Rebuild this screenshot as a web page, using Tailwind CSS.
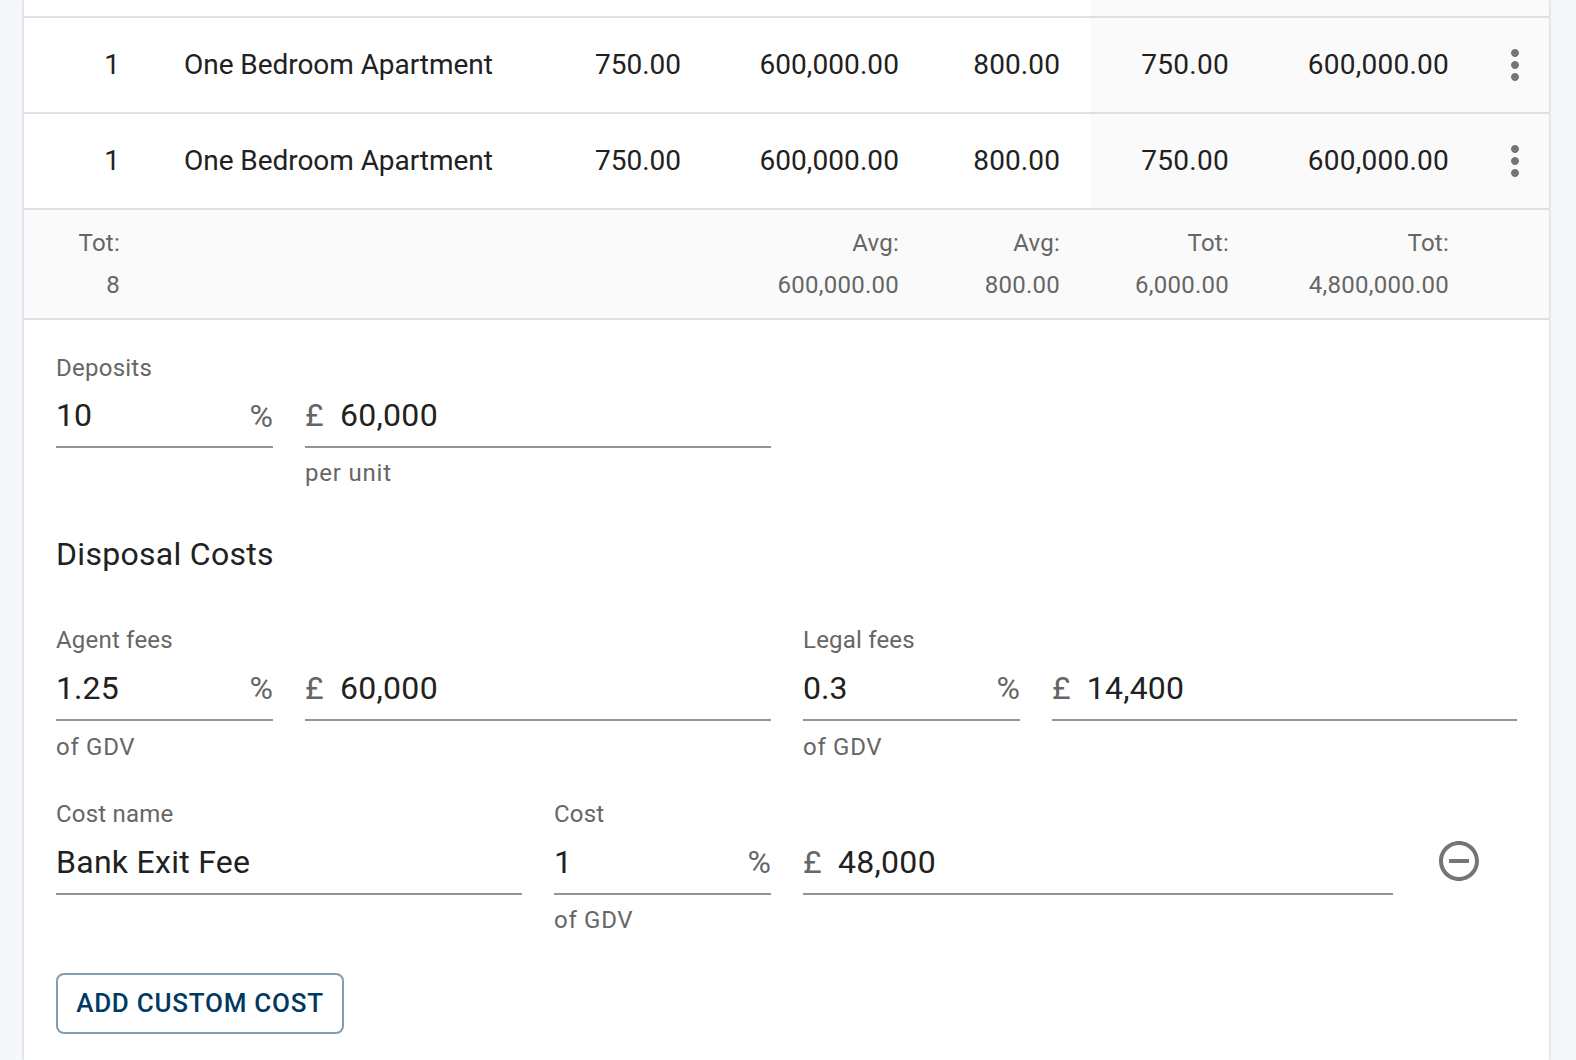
<!doctype html>
<html lang="en">
<head>
<meta charset="utf-8">
<title>Sales</title>
<script src="https://cdn.jsdelivr.net/npm/@tailwindcss/browser@4"></script>
</head>
<body class="bg-[#f5f8fb] font-['Roboto',sans-serif] text-[#212121] overflow-hidden">
<div class="ml-[24px] w-[1525px] h-[1060px] bg-white shadow-[0_0_3px_rgba(0,0,0,0.25)] overflow-hidden">

    <!-- Units table -->
    <div class="grid grid-cols-[128px_376px_185px_217px_161px_169px_221px_68px] h-[18px] border-b-2 border-[#e0e0e0]">
        <div class="col-span-5"></div>
        <div class="col-span-3 bg-[#fafafa]"></div>
    </div>

    <div class="grid grid-cols-[128px_376px_185px_217px_161px_169px_221px_68px] h-[96px] border-b-2 border-[#e0e0e0] text-[28px] items-stretch">
        <div class="flex items-center justify-end pr-[32px]">1</div>
        <div class="flex items-center pl-[32px] tracking-[-0.05px]">One Bedroom Apartment</div>
        <div class="flex items-center justify-end pr-[32px]">750.00</div>
        <div class="flex items-center justify-end pr-[31px] tracking-[0.08px]">600,000.00</div>
        <div class="flex items-center justify-end pr-[31px] tracking-[0.1px]">800.00</div>
        <div class="flex items-center justify-end pr-[31px] bg-[#fafafa] tracking-[0.3px]">750.00</div>
        <div class="flex items-center justify-end pr-[32px] bg-[#fafafa] tracking-[0.25px]">600,000.00</div>
        <div class="flex items-center justify-center bg-[#fafafa]">
            <svg class="w-[48px] h-[48px] fill-[#757575]" viewBox="0 0 24 24"><path d="M12 8c1.1 0 2-.9 2-2s-.9-2-2-2-2 .9-2 2 .9 2 2 2zm0 2c-1.1 0-2 .9-2 2s.9 2 2 2 2-.9 2-2-.9-2-2-2zm0 6c-1.1 0-2 .9-2 2s.9 2 2 2 2-.9 2-2-.9-2-2-2z"/></svg>
        </div>
    </div>

    <div class="grid grid-cols-[128px_376px_185px_217px_161px_169px_221px_68px] h-[96px] border-b-2 border-[#e0e0e0] text-[28px] items-stretch">
        <div class="flex items-center justify-end pr-[32px]">1</div>
        <div class="flex items-center pl-[32px] tracking-[-0.05px]">One Bedroom Apartment</div>
        <div class="flex items-center justify-end pr-[32px]">750.00</div>
        <div class="flex items-center justify-end pr-[31px] tracking-[0.08px]">600,000.00</div>
        <div class="flex items-center justify-end pr-[31px] tracking-[0.1px]">800.00</div>
        <div class="flex items-center justify-end pr-[31px] bg-[#fafafa] tracking-[0.3px]">750.00</div>
        <div class="flex items-center justify-end pr-[32px] bg-[#fafafa] tracking-[0.25px]">600,000.00</div>
        <div class="flex items-center justify-center bg-[#fafafa]">
            <svg class="w-[48px] h-[48px] fill-[#757575]" viewBox="0 0 24 24"><path d="M12 8c1.1 0 2-.9 2-2s-.9-2-2-2-2 .9-2 2 .9 2 2 2zm0 2c-1.1 0-2 .9-2 2s.9 2 2 2 2-.9 2-2-.9-2-2-2zm0 6c-1.1 0-2 .9-2 2s.9 2 2 2 2-.9 2-2-.9-2-2-2z"/></svg>
        </div>
    </div>

    <div class="grid grid-cols-[128px_376px_185px_217px_161px_169px_221px_68px] h-[110px] pt-[12px] border-b-2 border-[#e0e0e0] bg-[#fafafa] text-[24px] leading-[42px] text-[#666666] tracking-[0.25px] text-right">
        <div class="pr-[32px]">Tot:<br>8</div>
        <div></div>
        <div></div>
        <div class="pr-[31px]">Avg:<br>600,000.00</div>
        <div class="pr-[31px]">Avg:<br>800.00</div>
        <div class="pr-[31px]">Tot:<br>6,000.00</div>
        <div class="pr-[32px]">Tot:<br>4,800,000.00</div>
        <div></div>
    </div>

    <!-- Form -->
    <div class="px-[32px] pt-[32px]">
        <!-- Deposits -->
        <div class="flex gap-[32px]">
            <div class="w-[217px]">
                <div class="h-[32px] text-[24px] leading-[32px] text-[#666666] tracking-[0.25px]">Deposits</div>
                <div class="h-[64px] flex items-center justify-between border-b-2 border-[#949494] text-[32px]">
                    <span>10</span><span class="text-[32px] text-[#666666] mt-[1px]">%</span>
                </div>
            </div>
            <div class="w-[466px] pt-[32px]">
                <div class="h-[64px] flex items-center gap-[16px] border-b-2 border-[#949494] text-[32px] tracking-[0.3px]">
                    <span class="text-[#666666]">£</span><span>60,000</span>
                </div>
                <div class="mt-[9px] text-[24px] leading-[32px] text-[#666666] tracking-[0.8px]">per unit</div>
            </div>
        </div>

        <!-- Disposal costs -->
        <h2 class="mt-[41px] text-[32px] leading-[48px] tracking-[0.3px]">Disposal Costs</h2>

        <div class="mt-[46px] flex gap-[32px]">
            <div class="w-[217px]">
                <div class="h-[32px] text-[24px] leading-[32px] text-[#666666] tracking-[0.2px]">Agent fees</div>
                <div class="h-[65px] flex items-center justify-between border-b-2 border-[#949494] text-[32px] tracking-[0.1px]">
                    <span>1.25</span><span class="text-[32px] text-[#666666] mt-[1px]">%</span>
                </div>
                <div class="mt-[10px] text-[24px] leading-[32px] text-[#666666] tracking-[0.7px]">of GDV</div>
            </div>
            <div class="w-[466px] pt-[32px]">
                <div class="h-[65px] flex items-center gap-[16px] border-b-2 border-[#949494] text-[32px] tracking-[0.3px]">
                    <span class="text-[#666666]">£</span><span>60,000</span>
                </div>
            </div>
            <div class="w-[217px]">
                <div class="h-[32px] text-[24px] leading-[32px] text-[#666666] tracking-[0.2px]">Legal fees</div>
                <div class="h-[65px] flex items-center justify-between border-b-2 border-[#949494] text-[32px]">
                    <span>0.3</span><span class="text-[32px] text-[#666666] mt-[1px]">%</span>
                </div>
                <div class="mt-[10px] text-[24px] leading-[32px] text-[#666666] tracking-[0.7px]">of GDV</div>
            </div>
            <div class="w-[465px] pt-[32px]">
                <div class="h-[65px] flex items-center gap-[16px] border-b-2 border-[#949494] text-[32px] tracking-[0.2px]">
                    <span class="text-[#666666]">£</span><span>14,400</span>
                </div>
            </div>
        </div>

        <!-- Custom cost -->
        <div class="mt-[35px] flex gap-[32px]">
            <div class="w-[466px]">
                <div class="h-[32px] text-[24px] leading-[32px] text-[#666666] tracking-[0.2px]">Cost name</div>
                <div class="h-[65px] flex items-center border-b-2 border-[#949494] text-[32px] tracking-[0.28px]">Bank Exit Fee</div>
            </div>
            <div class="w-[217px]">
                <div class="h-[32px] text-[24px] leading-[32px] text-[#666666] tracking-[0.2px]">Cost</div>
                <div class="h-[65px] flex items-center justify-between border-b-2 border-[#949494] text-[32px]">
                    <span>1</span><span class="text-[32px] text-[#666666] mt-[1px]">%</span>
                </div>
                <div class="mt-[9px] text-[24px] leading-[32px] text-[#666666] tracking-[0.7px]">of GDV</div>
            </div>
            <div class="w-[590px] pt-[32px]">
                <div class="h-[65px] flex items-center gap-[16px] border-b-2 border-[#949494] text-[32px] tracking-[0.3px]">
                    <span class="text-[#666666]">£</span><span>48,000</span>
                </div>
            </div>
            <div class="pt-[39px] pl-[10px]">
                <svg class="w-[48px] h-[48px] fill-[#757575]" viewBox="0 0 24 24"><path d="M7 11v2h10v-2H7zm5-9C6.48 2 2 6.48 2 12s4.48 10 10 10 10-4.48 10-10S17.52 2 12 2zm0 18c-4.41 0-8-3.59-8-8s3.59-8 8-8 8 3.59 8 8-3.59 8-8 8z"/></svg>
            </div>
        </div>

        <button class="mt-[37px] w-[288px] h-[61px] rounded-[8px] border-2 border-[#7f9db5] text-[26px] font-medium tracking-[0.75px] text-[#003a63]">ADD CUSTOM COST</button>
    </div>
</div>
</body>
</html>
